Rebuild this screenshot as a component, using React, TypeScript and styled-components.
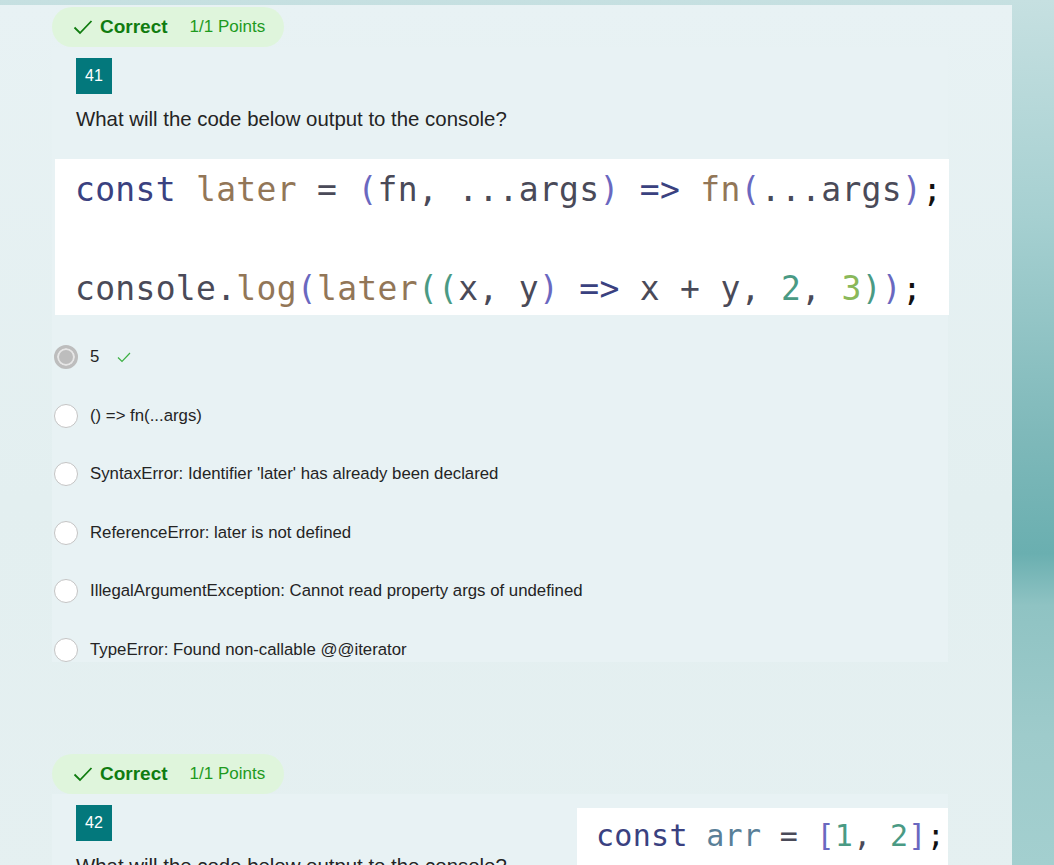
import React from "react";
import styled, { createGlobalStyle } from "styled-components";

const GlobalStyle = createGlobalStyle`
  html, body {
    margin: 0;
    padding: 0;
  }
  body {
    font-family: "Liberation Sans", Arial, sans-serif;
    color: #242424;
  }
`;

const Page = styled.div`
  width: 1054px;
  height: 865px;
  overflow: hidden;
  padding-top: 5px;
  box-sizing: border-box;
  background: linear-gradient(
    180deg,
    #c6e0e1 0%,
    #a6d0d1 25%,
    #7fb9ba 50%,
    #6aafb0 64%,
    #8fc3c3 70%,
    #9ecbcb 85%,
    #a3cfcf 100%
  );
`;

const Panel = styled.div`
  width: 1012px;
  min-height: 900px;
  background: linear-gradient(180deg, #e8f2f4 0%, #e3eff0 55%, #e5f0f1 100%);
  padding-left: 52px;
  box-sizing: border-box;
`;

const Question = styled.section<{ $gap: number }>`
  padding-top: 2px;
  margin-bottom: ${(p) => p.$gap}px;
`;

const Pill = styled.div`
  display: inline-flex;
  align-items: center;
  height: 40px;
  width: 232px;
  box-sizing: border-box;
  padding-left: 21px;
  border-radius: 20px;
  background: #dff5dc;
`;

const Correct = styled.span`
  font-weight: 700;
  font-size: 19px;
  color: #107c10;
  margin-left: 7px;
`;

const Points = styled.span`
  font-size: 17px;
  color: #1e9a1e;
  margin-left: 22px;
`;

const Card = styled.div`
  width: 896px;
  background: #e8f2f4;
  padding: 11px 0 0 0;
`;

const NumberBox = styled.div`
  width: 36px;
  height: 36px;
  margin-left: 24px;
  background: #03787c;
  color: #ffffff;
  font-size: 16px;
  display: flex;
  align-items: center;
  justify-content: center;
`;

const Prompt = styled.p`
  margin: 11px 0 0 24px;
  font-size: 20.4px;
  line-height: 28px;
  color: #242424;
`;

const CodeShot = styled.pre<{ $size: number; $width: number }>`
  margin: 0;
  width: ${(p) => p.$width}px;
  box-sizing: border-box;
  background: #ffffff;
  font-family: "DejaVu Sans Mono", "Liberation Mono", monospace;
  font-size: ${(p) => p.$size}px;
  letter-spacing: 0.3px;
  color: #333;
  overflow: hidden;
  white-space: pre;
`;

const BigCode = styled(CodeShot)`
  margin: 26px 0 0 3px;
  height: 156px;
  padding: 6px 0 0 20px;
  line-height: 49.5px;
`;

const SideCode = styled(CodeShot)`
  height: 60px;
  padding: 8px 0 0 19px;
  line-height: 40px;
`;

const Tok = styled.span<{ $c: string }>`
  color: ${(p) => p.$c};
`;

const Options = styled.div`
  display: flex;
  flex-direction: column;
  gap: 34.6px;
  margin-top: 30px;
  padding-left: 2px;
`;

const Option = styled.label`
  display: flex;
  align-items: center;
  height: 24px;
  font-size: 16.8px;
  color: #242424;
`;

const Radio = styled.span<{ $on?: boolean }>`
  width: 24px;
  height: 24px;
  border-radius: 50%;
  box-sizing: border-box;
  flex: none;
  margin-right: 12px;
  background: ${(p) => (p.$on ? "#bdbdbd" : "#ffffff")};
  border: ${(p) => (p.$on ? "3px solid #bdbdbd" : "1px solid #c4c4c4")};
  box-shadow: ${(p) => (p.$on ? "inset 0 0 0 2px #e6e6e6" : "none")};
`;

const SmallCheck = styled.svg`
  margin-left: 18px;
`;

const SplitRow = styled.div`
  display: flex;
  justify-content: space-between;
`;

const SideShot = styled.div`
  margin-top: 3px;
`;

const Tick = () => (
  <svg width="20" height="16" viewBox="0 0 20 16">
    <path d="M1.5 8.5 L7 14 L18.5 2" fill="none" stroke="#107c10" strokeWidth="1.8" />
  </svg>
);

const StatusPill = () => (
  <Pill>
    <Tick />
    <Correct>Correct</Correct>
    <Points>1/1 Points</Points>
  </Pill>
);

const NAVY = "#3a4180";
const BROWN = "#927657";
const PURPLE = "#6a68c0";
const DARK = "#4a4a58";
const TEAL = "#4a9a84";
const LIME = "#8ab85a";

const answers = [
  "5",
  "() => fn(...args)",
  "SyntaxError: Identifier 'later' has already been declared",
  "ReferenceError: later is not defined",
  "IllegalArgumentException: Cannot read property args of undefined",
  "TypeError: Found non-callable @@iterator",
];

export default function App() {
  return (
    <Page>
      <GlobalStyle />
      <Panel>
        <Question $gap={90}>
          <StatusPill />
          <Card>
            <NumberBox>41</NumberBox>
            <Prompt>What will the code below output to the console?</Prompt>
            <BigCode $size={33} $width={894}>
              <Tok $c={NAVY}>const</Tok> <Tok $c={BROWN}>later</Tok>{" "}
              <Tok $c={DARK}>=</Tok> <Tok $c={PURPLE}>(</Tok>
              <Tok $c={DARK}>fn, ...args</Tok>
              <Tok $c={PURPLE}>)</Tok> <Tok $c={NAVY}>=&gt;</Tok>{" "}
              <Tok $c={BROWN}>fn</Tok>
              <Tok $c={PURPLE}>(</Tok>
              <Tok $c={DARK}>...args</Tok>
              <Tok $c={PURPLE}>)</Tok>
              <Tok $c="#111">;</Tok>
              {"\n\n"}
              <Tok $c={DARK}>console.</Tok>
              <Tok $c={BROWN}>log</Tok>
              <Tok $c={PURPLE}>(</Tok>
              <Tok $c={BROWN}>later</Tok>
              <Tok $c={TEAL}>((</Tok>
              <Tok $c={DARK}>x, y</Tok>
              <Tok $c={PURPLE}>)</Tok> <Tok $c={NAVY}>=&gt;</Tok>{" "}
              <Tok $c={DARK}>x + y, </Tok>
              <Tok $c={TEAL}>2</Tok>
              <Tok $c={DARK}>, </Tok>
              <Tok $c={LIME}>3</Tok>
              <Tok $c={TEAL}>)</Tok>
              <Tok $c={PURPLE}>)</Tok>
              <Tok $c="#111">;</Tok>
            </BigCode>
            <Options>
              {answers.map((a, i) => (
                <Option key={a}>
                  <Radio $on={i === 0} />
                  {a}
                  {i === 0 && (
                    <SmallCheck width="14" height="11" viewBox="0 0 14 11">
                      <path d="M1 5.5 L5 9.5 L13 1" fill="none" stroke="#3cb043" strokeWidth="1.2" />
                    </SmallCheck>
                  )}
                </Option>
              ))}
            </Options>
          </Card>
        </Question>
        <Question $gap={0}>
          <StatusPill />
          <Card>
            <SplitRow>
              <div>
                <NumberBox>42</NumberBox>
                <Prompt>What will the code below output to the console?</Prompt>
              </div>
              <SideShot>
                <SideCode $size={30} $width={371}>
                  <Tok $c={NAVY}>const</Tok> <Tok $c="#5a7f98">arr</Tok>{" "}
                  <Tok $c={DARK}>=</Tok> <Tok $c={PURPLE}>[</Tok>
                  <Tok $c={TEAL}>1</Tok>
                  <Tok $c={DARK}>, </Tok>
                  <Tok $c={TEAL}>2</Tok>
                  <Tok $c={PURPLE}>]</Tok>
                  <Tok $c="#111">;</Tok>
                </SideCode>
              </SideShot>
            </SplitRow>
          </Card>
        </Question>
      </Panel>
    </Page>
  );
}
